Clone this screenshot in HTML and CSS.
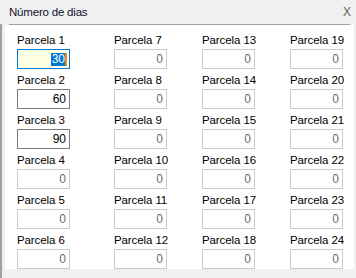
FILE: index.html
```html
<!DOCTYPE html>
<html lang="pt">
<head>
    <meta charset="UTF-8">
    <title>Número de dias</title>
    <link rel="stylesheet" href="styles.css">
</head>
<body>
    <div class="window">
        <div class="titlebar">
            <span class="title">Número de dias</span>
            <span class="close">X</span>
        </div>
        <div class="frame">
            <div class="rule"></div>
            <div class="panel">
                <div class="grid">
                    <div class="cell"><label>Parcela 1</label><div class="field active"><span class="sel">30</span><span class="caret"></span></div></div>
                    <div class="cell"><label>Parcela 2</label><input class="field" type="text" value="60"></div>
                    <div class="cell"><label>Parcela 3</label><input class="field" type="text" value="90"></div>
                    <div class="cell"><label>Parcela 4</label><input class="field" type="text" value="0" disabled></div>
                    <div class="cell"><label>Parcela 5</label><input class="field" type="text" value="0" disabled></div>
                    <div class="cell"><label>Parcela 6</label><input class="field" type="text" value="0" disabled></div>

                    <div class="cell"><label>Parcela 7</label><input class="field" type="text" value="0" disabled></div>
                    <div class="cell"><label>Parcela 8</label><input class="field" type="text" value="0" disabled></div>
                    <div class="cell"><label>Parcela 9</label><input class="field" type="text" value="0" disabled></div>
                    <div class="cell"><label>Parcela 10</label><input class="field" type="text" value="0" disabled></div>
                    <div class="cell"><label>Parcela 11</label><input class="field" type="text" value="0" disabled></div>
                    <div class="cell"><label>Parcela 12</label><input class="field" type="text" value="0" disabled></div>

                    <div class="cell"><label>Parcela 13</label><input class="field" type="text" value="0" disabled></div>
                    <div class="cell"><label>Parcela 14</label><input class="field" type="text" value="0" disabled></div>
                    <div class="cell"><label>Parcela 15</label><input class="field" type="text" value="0" disabled></div>
                    <div class="cell"><label>Parcela 16</label><input class="field" type="text" value="0" disabled></div>
                    <div class="cell"><label>Parcela 17</label><input class="field" type="text" value="0" disabled></div>
                    <div class="cell"><label>Parcela 18</label><input class="field" type="text" value="0" disabled></div>

                    <div class="cell"><label>Parcela 19</label><input class="field" type="text" value="0" disabled></div>
                    <div class="cell"><label>Parcela 20</label><input class="field" type="text" value="0" disabled></div>
                    <div class="cell"><label>Parcela 21</label><input class="field" type="text" value="0" disabled></div>
                    <div class="cell"><label>Parcela 22</label><input class="field" type="text" value="0" disabled></div>
                    <div class="cell"><label>Parcela 23</label><input class="field" type="text" value="0" disabled></div>
                    <div class="cell"><label>Parcela 24</label><input class="field" type="text" value="0" disabled></div>
                </div>
            </div>
        </div>
    </div>
</body>
</html>
```

FILE: styles.css
```css
* {
    box-sizing: border-box;
}

body {
    margin: 0;
    background-color: #f0f0f0;
    color: #000;
    font-family: "Liberation Sans", Arial, sans-serif;
    font-size: 11.5px;
}

.window {
    width: 356px;
    height: 278px;
    display: flex;
    flex-direction: column;
    overflow: hidden;
}

.titlebar {
    height: 24px;
    flex: none;
    display: flex;
    align-items: center;
    justify-content: space-between;
    padding: 0 5px 0 9px;
}

.title {
    font-size: 11.5px;
    letter-spacing: -0.2px;
    color: #101030;
}

.close {
    font-size: 12px;
    color: #606060;
}

.frame {
    flex: 1;
    border-left: 2px solid #a0a0a0;
    padding: 0 2px 9px 3px;
    display: flex;
    flex-direction: column;
}

.rule {
    height: 1px;
    flex: none;
    margin: 0 4px 0 4px;
    background-color: #a0a0a0;
}

.panel {
    flex: 1;
    background-color: #fff;
    padding: 8px 0 0 12px;
}

.grid {
    display: grid;
    grid-template-columns: 97px 88px 88px 60px;
    grid-template-rows: repeat(6, auto);
    grid-auto-flow: column;
    row-gap: 4px;
}

.cell {
    display: flex;
    flex-direction: column;
    gap: 2px;
}

.cell label {
    display: block;
    line-height: 14px;
    white-space: nowrap;
    letter-spacing: -0.1px;
}

.field {
    width: 53px;
    height: 20px;
    margin: 0;
    padding: 0 3px 0 0;
    border: 1px solid #7a7a7a;
    border-radius: 0;
    background-color: #fff;
    font-family: "Liberation Sans", Arial, sans-serif;
    font-size: 12px;
    color: #000;
    text-align: right;
    outline: none;
}

.field:disabled {
    border-color: #cccccc;
    color: #6d6d6d;
    -webkit-text-fill-color: #6d6d6d;
    opacity: 1;
    background-color: #fff;
}

.field.active {
    display: flex;
    align-items: center;
    justify-content: flex-end;
    padding-right: 2px;
    border-color: #0078d7;
    background-color: #ffffe1;
}

.sel {
    background-color: #0078d7;
    color: #fff;
    line-height: 13px;
    padding: 0 0 0 1px;
}

.caret {
    width: 2px;
    height: 13px;
    background-color: #f0861e;
}
```
